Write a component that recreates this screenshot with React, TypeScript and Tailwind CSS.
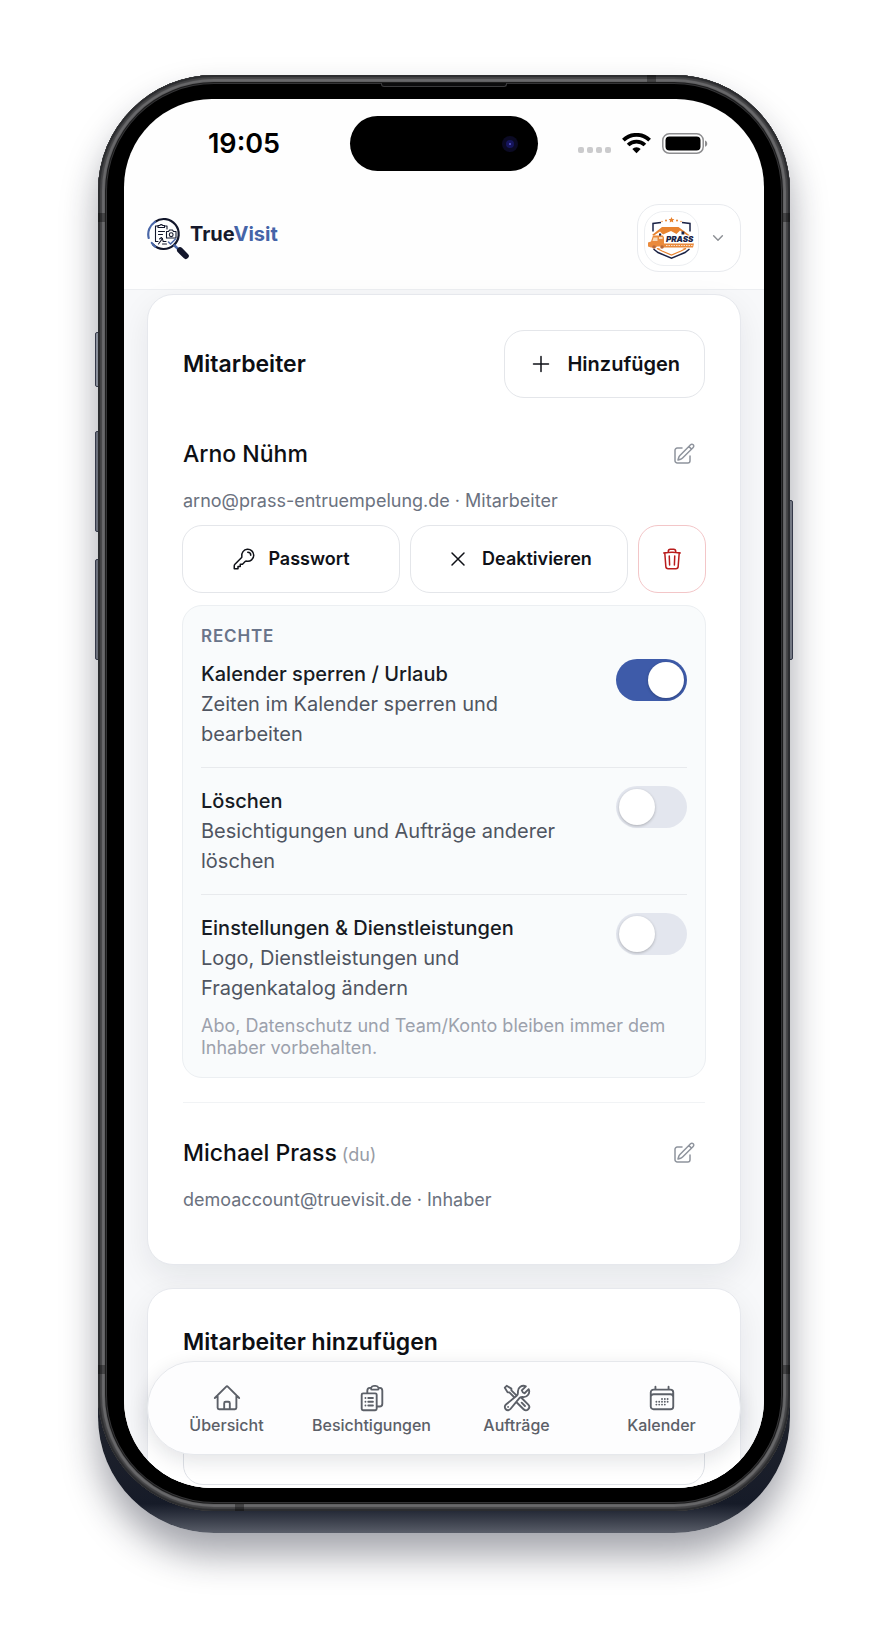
import { useState } from "react";
import type { ReactNode } from "react";
import {
  HiOutlineCalendarDays,
  HiOutlineChevronDown,
  HiOutlineClipboardDocumentList,
  HiOutlineHome,
  HiOutlineKey,
  HiOutlinePencilSquare,
  HiOutlinePlus,
  HiOutlineTrash,
  HiOutlineWrenchScrewdriver,
  HiOutlineXMark,
} from "react-icons/hi2";

function StatusBar() {
  return (
    <div className="grid grid-cols-[1fr_188px_1fr] items-center pt-[17px]">
      <div className="pl-[14px] text-center text-[27px] leading-8 font-semibold text-black">19:05</div>
      <div className="flex h-[55px] items-center justify-end rounded-full bg-black pr-5">
        <span className="flex size-4 items-center justify-center rounded-full bg-[#0b0a24]">
          <span className="flex size-2 items-center justify-center rounded-full bg-[#16155c]">
            <span className="size-0.5 rounded-full bg-[#5a5ad0]" />
          </span>
        </span>
      </div>
      <div className="flex items-center justify-center pr-4">
        <svg width="33" height="22" viewBox="0 0 33 22" aria-hidden="true">
          <g fill="#cbcbcd">
            <rect x="0" y="14" width="6" height="6" rx="2" />
            <rect x="9" y="14" width="6" height="6" rx="2" />
            <rect x="18" y="14" width="6" height="6" rx="2" />
            <rect x="27" y="14" width="6" height="6" rx="2" />
          </g>
        </svg>
        <svg className="ml-[11px]" width="29" height="22" viewBox="0 0 29 22" aria-hidden="true">
          <g fill="none" stroke="#000" strokeWidth="3.8">
            <path d="M1.400 7.200a18.600 18.600 0 0 1 26.200 0" />
            <path d="M6.100 12a12 12 0 0 1 16.800 0" />
          </g>
          <path d="M14.500 20.200l-4.200-4.300a6 6 0 0 1 8.400 0z" />
        </svg>
        <svg className="ml-[11px]" width="46" height="22" viewBox="0 0 46 22" aria-hidden="true">
          <rect x="0.8" y="0.8" width="40.4" height="19.500" rx="6.500" fill="none" stroke="#8e8e90" strokeWidth="1.500" />
          <rect x="3.500" y="3.500" width="35" height="14.100" rx="4" />
          <path d="M43 7.500c3 .8 3 5.500 0 6.300z" fill="#8e8e90" />
        </svg>
      </div>
    </div>
  );
}

function LensLogo() {
  return (
    <svg width="43" height="43" viewBox="0 0 43 43" fill="none" strokeLinecap="round" aria-hidden="true">
      <path d="M8 4.800A15 15 0 1 1 6 27.500" stroke="#12162b" strokeWidth="2.200" />
      <path d="M1.700 21A15 15 0 0 1 8 4.800" stroke="#4a67a8" strokeWidth="2.200" />
      <path d="M4.800 26a15 15 0 0 0 3.500 3.600" stroke="#4a67a8" strokeWidth="2.200" />
      <path d="M27.500 28.500l3.200 3.200" stroke="#4a67a8" strokeWidth="2.500" />
      <path d="M33 33.200l5.800 5.800" stroke="#12162b" strokeWidth="6" />
      <g stroke="#12162b" strokeWidth="1.100" strokeLinejoin="round">
        <path d="M11 9H8.500v15.500h2.500M17.500 9h2.500v3" />
        <path d="M11 10.500h6.500V8.500h-1.800a1.700 1.700 0 0 0-3 0H11z" />
        <path d="M11.500 14.500h6M11.500 17.500h4" />
        <path d="M19.500 14.500h2l1-1.500h3l1 1.500h2.500V21h-9.500z" />
        <circle cx="24.200" cy="17.700" r="1.900" />
        <path d="M11.500 27l4-5.500M12.500 22l2-1.500 1.500 3M15.500 27h4M16 24.500h3" />
      </g>
      <path d="M21.500 25l2 2 5-5" stroke="#4a67a8" strokeWidth="1.500" />
    </svg>
  );
}

function CompanyLogo() {
  return (
    <svg width="47" height="43" viewBox="0 0 47 43" className="shrink-0" role="img" aria-label="Prass">
      <g fill="#e8832f">
        <path d="M23.500 0l.9 1.900 2 .2-1.500 1.400.4 2-1.800-1-1.800 1 .4-2L20.600 2.100l2-.2z" />
        <circle cx="18" cy="3.500" r="1" />
        <circle cx="29" cy="3.500" r="1" />
        <circle cx="14" cy="4.500" r=".7" />
        <circle cx="33" cy="4.500" r=".7" />
      </g>
      <g fill="none" stroke="#1b2346" strokeWidth="1.500">
        <path d="M13 5.500L5 6.500v8M34 5.500l8 1v8" />
        <path d="M5.500 32l4.500 3.500 13.500 5.800L37 35.500l4.500-3.500" />
      </g>
      <path d="M9 31.500l5 2.500 9.500 4 9.500-4 5-2.500z" fill="#fff" stroke="#e8832f" strokeWidth="1.200" />
      <path d="M10 31h27l-8 3-5.500 3-5.500-3z" fill="#fff" />
      <path d="M4 18l10-8h16.500l11.500 8.500-2 .5-8-5.500-3.500 3.500L23 14l-8 3.500-3-3-6 4z" fill="#e8832f" />
      <path d="M8.500 18l3.500-2.500 3.500 2.500v3h-7zM30.500 18l3.500-3 4 3.500H30z" fill="#fff" />
      <path d="M11 16.500h2.200V19H11zM33.500 14.500h2.800v3h-2.800z" fill="#1b2346" />
      <path d="M0 29.500v-4l3-1 2-6h10l1 2v6h30l-1 4H14l-1-1H9l-1 1H3z" fill="#ea8a3c" />
      <path d="M5.500 20.500h4v3.500h-5zM11 20h3.500v2H11z" fill="#f8d9b8" />
      <circle cx="6" cy="30" r="1.800" fill="#b8683a" />
      <circle cx="14" cy="30" r="1.800" fill="#b8683a" />
      <rect x="17" y="18.500" width="30" height="7.500" fill="#fff" />
      <text x="18" y="25.200" fontFamily="Inter, sans-serif" fontSize="8" fontWeight="900" fontStyle="italic" fill="#1b2346">
        PRASS
      </text>
      <path d="M18 28.500h27" stroke="#fbe3cc" strokeWidth="1.200" strokeDasharray="1.500 1" />
    </svg>
  );
}

function Header() {
  return (
    <header className="flex items-center justify-between border-b border-[#eceef1] px-[23px] pt-[33px] pb-[17px]">
      <a href="#" className="flex items-center">
        <LensLogo />
        <span className="mb-2 text-[20px] leading-6 font-bold text-[#15182b]">
          True<span className="text-[#4564a8]">Visit</span>
        </span>
      </a>
      <button
        type="button"
        aria-label="Konto"
        className="flex h-[68px] items-center gap-3 rounded-[22px] border border-[#e8eaee] bg-white pr-[15px] pl-1.5"
      >
        <span className="flex size-[55px] items-center justify-center rounded-[20px] border border-[#eceef1]">
          <CompanyLogo />
        </span>
        <HiOutlineChevronDown className="size-3.5 stroke-[2.5px] text-[#8d9095]" />
      </button>
    </header>
  );
}

function Card({ className, children }: { className: string; children: ReactNode }) {
  return (
    <section
      className={`rounded-[26px] border border-[#e6e8ed] bg-white px-[35px] pt-[35px] shadow-[0_12px_32px_rgba(15,23,42,0.08)] ${className}`}
    >
      {children}
    </section>
  );
}

function Member({ name, self, email, role }: { name: string; self?: boolean; email: string; role: string }) {
  return (
    <>
      <div className="flex h-11 items-center justify-between pr-[9px]">
        <h3 className="text-[23px] font-medium text-[#0d0f14]">
          {name}
          {self && <span className="text-lg font-normal text-[#989ca6]"> (du)</span>}
        </h3>
        <button type="button" aria-label={`${name} bearbeiten`} className="text-[#8f949d]">
          <HiOutlinePencilSquare className="size-6" />
        </button>
      </div>
      <p className="mt-[13px] text-lg leading-6 text-[#6b7280]">
        {email} · {role}
      </p>
    </>
  );
}

const outlineButton =
  "flex h-[68px] items-center justify-center rounded-[20px] border border-[#e4e6ea] bg-white font-semibold text-[#0f1117]";

type Permission = { id: string; title: string; text: string; on: boolean };

const permissions: Permission[] = [
  { id: "kalender", title: "Kalender sperren / Urlaub", text: "Zeiten im Kalender sperren und bearbeiten", on: true },
  { id: "loeschen", title: "Löschen", text: "Besichtigungen und Aufträge anderer löschen", on: false },
  {
    id: "einstellungen",
    title: "Einstellungen & Dienstleistungen",
    text: "Logo, Dienstleistungen und Fragenkatalog ändern",
    on: false,
  },
];

function PermissionRow({ id, title, text, on }: Permission) {
  const [checked, setChecked] = useState(on);
  return (
    <div className="flex items-start justify-between gap-12 border-t border-[#e8eaed] py-[18px] first:border-0 first:pt-0 last:pb-0">
      <label htmlFor={id} className="text-xl leading-[30px]">
        <span className="block font-medium text-[#171b24]">{title}</span>
        <span className="block text-[#4f5561]">{text}</span>
      </label>
      <input
        id={id}
        type="checkbox"
        role="switch"
        checked={checked}
        onChange={(e) => setChecked(e.target.checked)}
        className="flex h-[42px] w-[71px] shrink-0 appearance-none items-center rounded-full bg-[#e3e6ee] px-[3px] before:size-9 before:rounded-full before:bg-white before:shadow-[0_1px_3px_rgba(0,0,0,0.25)] checked:justify-end checked:bg-[#3e5ba9]"
      />
    </div>
  );
}

function StaffCard() {
  return (
    <Card className="pb-[52px]">
      <div className="flex items-center justify-between">
        <h2 className="text-[23px] font-semibold text-[#0d0f14]">Mitarbeiter</h2>
        <button type="button" className={`${outlineButton} gap-[14px] px-6 text-xl`}>
          <HiOutlinePlus className="size-6" />
          Hinzufügen
        </button>
      </div>
      <div className="mt-[34px]">
        <Member name="Arno Nühm" email="arno@prass-entruempelung.de" role="Mitarbeiter" />
        <div className="-mx-px mt-3 flex gap-[10px]">
          <button type="button" className={`${outlineButton} flex-1 gap-3 text-lg`}>
            <HiOutlineKey className="size-6" />
            Passwort
          </button>
          <button type="button" className={`${outlineButton} flex-1 gap-3 text-lg`}>
            <HiOutlineXMark className="size-6" />
            Deaktivieren
          </button>
          <button
            type="button"
            aria-label="Löschen"
            className="flex size-[68px] items-center justify-center rounded-[20px] border border-[#f3c6c8] bg-white text-[#b91c1c]"
          >
            <HiOutlineTrash className="size-6" />
          </button>
        </div>
        <div className="-mx-px mt-3 rounded-[20px] border border-[#eceff2] bg-[#f9fbfc] p-[18px]">
          <h4 className="text-[17px] leading-6 font-semibold tracking-wider text-[#69748a]">RECHTE</h4>
          <div className="mt-[11px]">
            {permissions.map((p) => (
              <PermissionRow key={p.id} {...p} />
            ))}
          </div>
          <p className="mt-3 text-lg leading-[22px] text-[#9ca1ac]">
            Abo, Datenschutz und Team/Konto bleiben immer dem Inhaber vorbehalten.
          </p>
        </div>
      </div>
      <div className="mt-6 border-t border-[#f1f3f5] pt-7">
        <Member name="Michael Prass" self email="demoaccount@truevisit.de" role="Inhaber" />
      </div>
    </Card>
  );
}

const tabs = [
  { label: "Übersicht", Icon: HiOutlineHome },
  { label: "Besichtigungen", Icon: HiOutlineClipboardDocumentList },
  { label: "Aufträge", Icon: HiOutlineWrenchScrewdriver },
  { label: "Kalender", Icon: HiOutlineCalendarDays },
];

function TabBar() {
  return (
    <nav className="absolute inset-x-[23px] bottom-[33px] grid grid-cols-4 rounded-full border border-[#e6e8ec] bg-[#fdfdfe] px-[6px] pt-[21px] pb-[18px] shadow-[0_6px_20px_rgba(15,23,42,0.12)]">
      {tabs.map(({ label, Icon }) => (
        <a key={label} href="#" className="flex flex-col items-center gap-px text-[#5c6068]">
          <Icon className="size-[30px]" />
          <span className="text-base leading-[22px] font-medium">{label}</span>
        </a>
      ))}
    </nav>
  );
}

function SideButtons() {
  return (
    <div aria-hidden="true">
      <span className="absolute top-[257px] -left-[3px] h-[55px] w-2 rounded-l-[2px] border border-[#3c4150] bg-[#a9adb8]" />
      <span className="absolute top-[356px] -left-[3px] h-[101px] w-2 rounded-l-[2px] border border-[#3c4150] bg-[#80848f]" />
      <span className="absolute top-[484px] -left-[3px] h-[101px] w-2 rounded-l-[2px] border border-[#3c4150] bg-[#80848f]" />
      <span className="absolute top-[425px] -right-[3px] h-[160px] w-2 rounded-r-[2px] border border-[#3c4150] bg-[#8b8f9a]" />
    </div>
  );
}

function FrameDetails() {
  return (
    <div aria-hidden="true">
      <span className="absolute top-2 left-1/2 h-1 w-[126px] -translate-x-1/2 rounded-b-[3px] border-x border-b border-[#3a3a3c] bg-[#0c0c0d]" />
      <span className="absolute top-0 right-[134px] h-[7px] w-[9px] bg-black/35" />
      <span className="absolute bottom-0 left-[137px] h-[7px] w-[9px] bg-black/35" />
      <span className="absolute top-[138px] left-0 h-[9px] w-[7px] bg-black/35" />
      <span className="absolute top-[138px] right-0 h-[9px] w-[7px] bg-black/35" />
      <span className="absolute bottom-[137px] left-0 h-[9px] w-[7px] bg-black/35" />
      <span className="absolute right-0 bottom-[137px] h-[9px] w-[7px] bg-black/35" />
    </div>
  );
}

export default function App() {
  return (
    <div className="min-h-screen bg-white px-[98px] pt-[75px] pb-[111px] font-[Inter,sans-serif]">
      <div className="relative">
        <SideButtons />
        <div className="relative rounded-t-[118px] rounded-b-[116px] bg-linear-to-b from-[#333335] from-80% via-[#161b28] via-98% to-[#5a5e69] pb-[22px] shadow-[0_22px_36px_rgba(25,28,45,0.4)]">
          <div className="relative rounded-[116px] bg-black px-[26px] pt-6 pb-[23px] shadow-[inset_0_0_1px_2px_#2b2c2f,inset_0_0_1px_4px_#454547,inset_0_0_1px_7px_#69696b,inset_0_0_0_8px_#141415,inset_0_0_0_9px_#343436]">
            <FrameDetails />
            <div className="relative aspect-[640/1389] overflow-hidden rounded-[88px] bg-[#fefefe]">
              <StatusBar />
              <Header />
              <main className="flex flex-col gap-[23px] bg-[#f7f8fa] px-[23px] pt-1">
                <StaffCard />
                <Card className="pb-10">
                  <h2 className="text-[23px] leading-9 font-semibold text-[#0d0f14]">Mitarbeiter hinzufügen</h2>
                  <input
                    aria-label="Name"
                    className="mt-[58px] block h-[67px] w-full rounded-[20px] border border-[#dfe2e7] bg-white px-5 text-lg"
                  />
                </Card>
              </main>
              <TabBar />
            </div>
          </div>
        </div>
      </div>
    </div>
  );
}
